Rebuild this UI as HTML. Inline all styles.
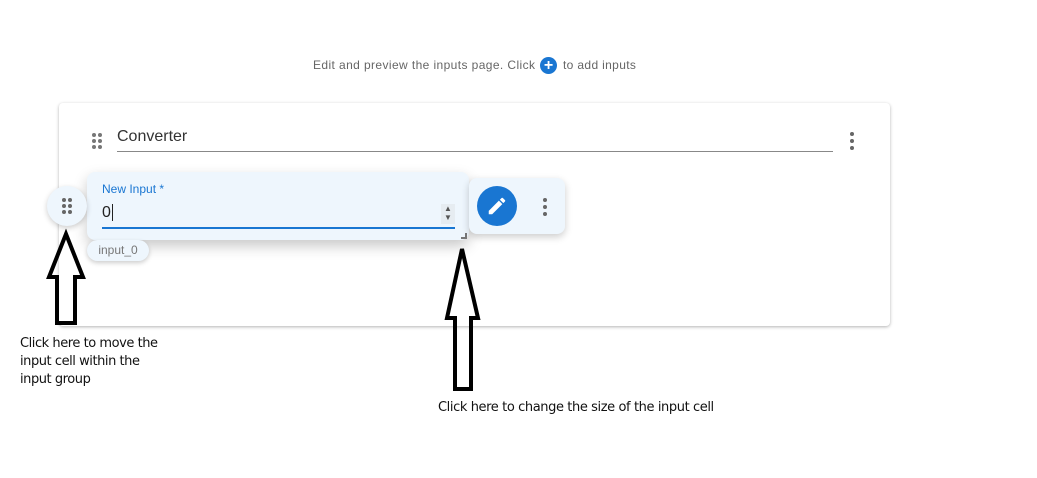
<!DOCTYPE html>
<html><head><style>
body{margin:0;width:1037px;height:478px;background:#fff;position:relative;overflow:hidden;font-family:"Liberation Sans",sans-serif}
.a{position:absolute}
</style></head><body>
<div class="a" style="left:313px;top:58px;font-size:12px;color:#666;letter-spacing:.4px">Edit and preview the inputs page. Click</div>
<div class="a" style="left:540px;top:57px;width:17px;height:17px;border-radius:50%;background:#1976d2;color:#fff;font-size:16px;line-height:17px;text-align:center;font-weight:bold">+</div>
<div class="a" style="left:563px;top:58px;font-size:12px;color:#666;letter-spacing:.35px">to add inputs</div>

<div class="a" style="left:59px;top:103px;width:831px;height:223px;background:#fff;border-radius:4px;box-shadow:0 1px 3px rgba(0,0,0,.3)"></div>
<svg class="a" style="left:90px;top:132px" width="14" height="18"><g fill="#777"><circle cx="4" cy="3" r="2"/><circle cx="10" cy="3" r="2"/><circle cx="4" cy="9" r="2"/><circle cx="10" cy="9" r="2"/><circle cx="4" cy="15" r="2"/><circle cx="10" cy="15" r="2"/></g></svg>
<div class="a" style="left:117px;top:128px;font-size:16px;color:#333">Converter</div>
<div class="a" style="left:117px;top:151px;width:716px;height:1px;background:#888"></div>
<svg class="a" style="left:848px;top:131px" width="8" height="20"><g fill="#666"><circle cx="4" cy="3" r="2"/><circle cx="4" cy="10" r="2"/><circle cx="4" cy="17" r="2"/></g></svg>

<div class="a" style="left:87px;top:172px;width:382px;height:68px;background:#eef6fd;border-radius:8px;box-shadow:0 6px 14px rgba(0,0,0,.22)"></div>
<div class="a" style="left:102px;top:182px;font-size:12px;color:#1976d2">New Input *</div>
<div class="a" style="left:102px;top:204px;font-size:16px;color:#222">0<span style="border-left:1px solid #222;margin-left:1px"></span></div>
<div class="a" style="left:441px;top:204px;width:14px;height:20px;background:#e6ecf1;font-size:8px;color:#555;line-height:9px;text-align:center">▲<br>▼</div>
<div class="a" style="left:102px;top:227px;width:353px;height:2px;background:#1976d2"></div>
<div class="a" style="left:461px;top:233px;width:4px;height:4px;border-right:2px solid #777;border-bottom:2px solid #777"></div>

<div class="a" style="left:47px;top:186px;width:40px;height:40px;border-radius:50%;background:#eef6fd;box-shadow:0 2px 6px rgba(0,0,0,.2)"></div>
<svg class="a" style="left:61px;top:197px" width="12" height="18"><g fill="#666"><circle cx="3" cy="3" r="2"/><circle cx="9" cy="3" r="2"/><circle cx="3" cy="9" r="2"/><circle cx="9" cy="9" r="2"/><circle cx="3" cy="15" r="2"/><circle cx="9" cy="15" r="2"/></g></svg>

<div class="a" style="left:87px;top:240px;width:62px;height:21px;border-radius:11px;background:#eef6fd;box-shadow:0 2px 5px rgba(0,0,0,.2);font-size:12px;color:#777;line-height:21px;text-align:center">input_0</div>

<div class="a" style="left:469px;top:178px;width:96px;height:56px;background:#eef6fd;border-radius:8px;box-shadow:0 3px 8px rgba(0,0,0,.2)"></div>
<div class="a" style="left:477px;top:186px;width:40px;height:40px;border-radius:50%;background:#1976d2"></div>
<svg class="a" style="left:486px;top:195px" width="22" height="22" viewBox="0 0 24 24"><path fill="#fff" d="M3 17.25V21h3.75L17.81 9.94l-3.75-3.75L3 17.25zM20.71 7.04a1 1 0 0 0 0-1.41l-2.34-2.34a1 1 0 0 0-1.41 0l-1.83 1.83 3.75 3.75 1.83-1.83z"/></svg>
<svg class="a" style="left:541px;top:197px" width="8" height="20"><g fill="#666"><circle cx="4" cy="3" r="2"/><circle cx="4" cy="10" r="2"/><circle cx="4" cy="17" r="2"/></g></svg>

<svg class="a" style="left:0;top:0" width="1037" height="478"><g fill="none" stroke="#000" stroke-width="4" stroke-linejoin="miter">
<path d="M66 234 L83 277 L75 277 L75 323 L57 323 L57 277 L49 277 Z"/>
<path d="M462 249 L478 318 L471 318 L471 389 L455 389 L455 318 L447 318 Z"/>
</g></svg>

<div class="a" style="left:20px;top:335px;font-size:13px;line-height:18px;color:#111;font-family:'DejaVu Sans',sans-serif;letter-spacing:-.45px">Click here to move the<br>input cell within the<br>input group</div>
<div class="a" style="left:438px;top:400px;font-size:13px;color:#111;font-family:'DejaVu Sans',sans-serif;letter-spacing:-.4px">Click here to change the size of the input cell</div>
</body></html>
